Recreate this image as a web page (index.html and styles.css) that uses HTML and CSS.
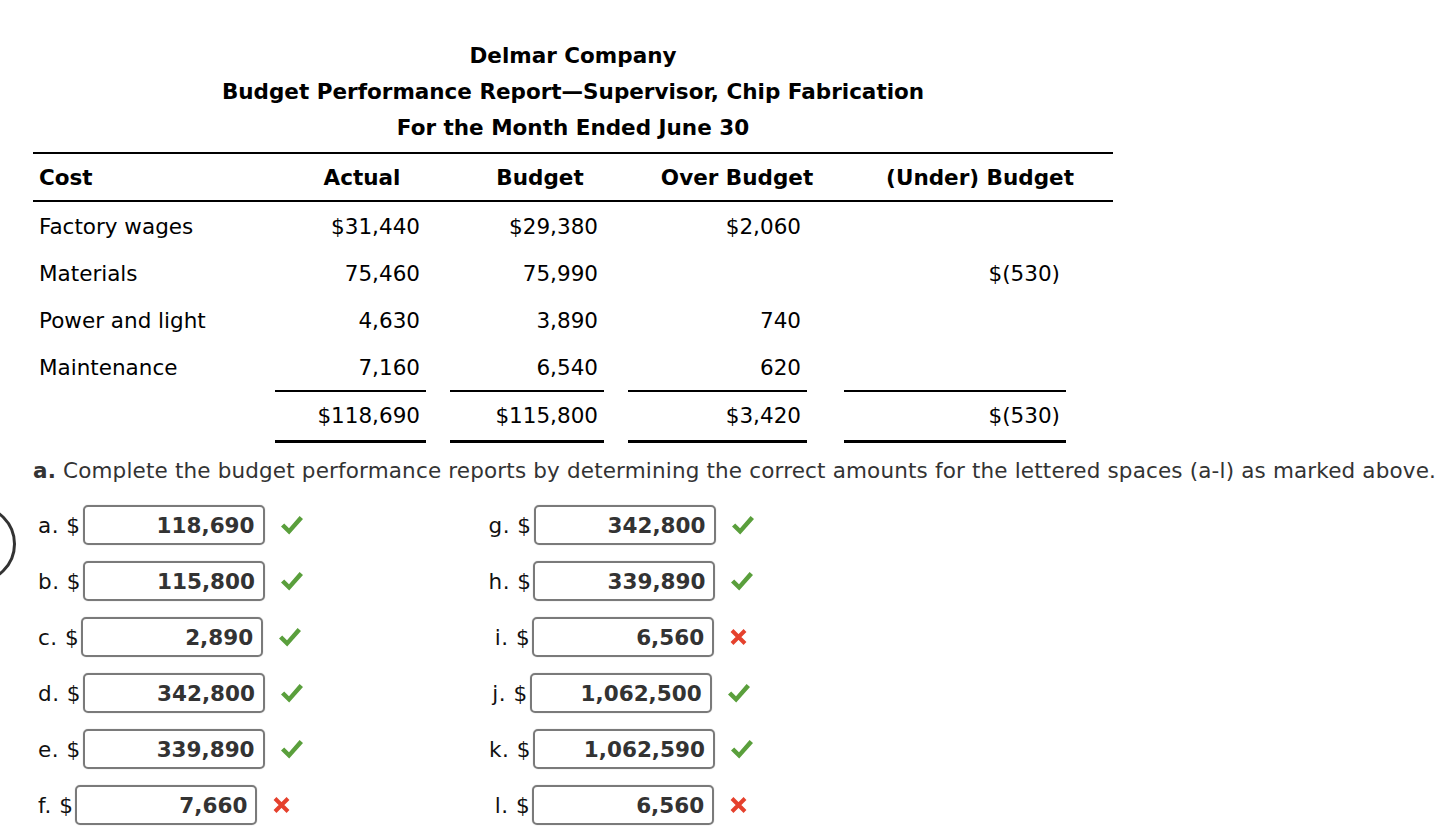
FILE: index.html
```html
<!DOCTYPE html>
<html>
<head>
<meta charset="utf-8">
<link rel="stylesheet" href="styles.css">
</head>
<body>
<div class="page">
  <div class="circle"></div>
  <div class="title">
    <div>Delmar Company</div>
    <div>Budget Performance Report—Supervisor, Chip Fabrication</div>
    <div>For the Month Ended June 30</div>
  </div>
  <div class="report">
    <div class="hd c-cost">Cost</div>
    <div class="hd c-act">Actual</div>
    <div class="hd c-bud">Budget</div>
    <div class="hd c-over">Over Budget</div>
    <div class="hd c-under">(Under) Budget</div>
    <div class="hd"></div>

    <div class="cell name">Factory wages</div>
    <div class="cell num">$31,440</div>
    <div class="cell num">$29,380</div>
    <div class="cell num">$2,060</div>
    <div class="cell num"></div>
    <div class="cell"></div>

    <div class="cell name">Materials</div>
    <div class="cell num">75,460</div>
    <div class="cell num">75,990</div>
    <div class="cell num"></div>
    <div class="cell num">$(530)</div>
    <div class="cell"></div>

    <div class="cell name">Power and light</div>
    <div class="cell num">4,630</div>
    <div class="cell num">3,890</div>
    <div class="cell num">740</div>
    <div class="cell num"></div>
    <div class="cell"></div>

    <div class="cell name">Maintenance</div>
    <div class="cell num">7,160</div>
    <div class="cell num">6,540</div>
    <div class="cell num">620</div>
    <div class="cell num"></div>
    <div class="cell"></div>

    <div class="tcell"></div>
    <div class="tcell"><div class="tot">$118,690</div></div>
    <div class="tcell"><div class="tot in24">$115,800</div></div>
    <div class="tcell"><div class="tot in24">$3,420</div></div>
    <div class="tcell"><div class="tot in37">$(530)</div></div>
    <div class="tcell"></div>
  </div>

  <p class="instr"><b>a.</b> Complete the budget performance reports by determining the correct amounts for the lettered spaces (a-l) as marked above.</p>

  <div class="answers">
    <div class="ans left"><span class="lbl">a. $</span><span class="field">118,690</span><svg class="ic ok" viewBox="0 0 22 20"><path d="M0 11.5 L3.2 8.5 L8 13.2 L18.6 1 L22 4 L8.2 19.5 Z"/></svg></div>
    <div class="ans right"><span class="lbl">g. $</span><span class="field">342,800</span><svg class="ic ok" viewBox="0 0 22 20"><path d="M0 11.5 L3.2 8.5 L8 13.2 L18.6 1 L22 4 L8.2 19.5 Z"/></svg></div>

    <div class="ans left"><span class="lbl">b. $</span><span class="field">115,800</span><svg class="ic ok" viewBox="0 0 22 20"><path d="M0 11.5 L3.2 8.5 L8 13.2 L18.6 1 L22 4 L8.2 19.5 Z"/></svg></div>
    <div class="ans right"><span class="lbl">h. $</span><span class="field">339,890</span><svg class="ic ok" viewBox="0 0 22 20"><path d="M0 11.5 L3.2 8.5 L8 13.2 L18.6 1 L22 4 L8.2 19.5 Z"/></svg></div>

    <div class="ans left"><span class="lbl">c. $</span><span class="field">2,890</span><svg class="ic ok" viewBox="0 0 22 20"><path d="M0 11.5 L3.2 8.5 L8 13.2 L18.6 1 L22 4 L8.2 19.5 Z"/></svg></div>
    <div class="ans right"><span class="lbl">i. $</span><span class="field">6,560</span><svg class="ic bad" viewBox="0 0 17 16"><path d="M2 1.5 L15 14.5 M15 1.5 L2 14.5"/></svg></div>

    <div class="ans left"><span class="lbl">d. $</span><span class="field">342,800</span><svg class="ic ok" viewBox="0 0 22 20"><path d="M0 11.5 L3.2 8.5 L8 13.2 L18.6 1 L22 4 L8.2 19.5 Z"/></svg></div>
    <div class="ans right"><span class="lbl">j. $</span><span class="field">1,062,500</span><svg class="ic ok" viewBox="0 0 22 20"><path d="M0 11.5 L3.2 8.5 L8 13.2 L18.6 1 L22 4 L8.2 19.5 Z"/></svg></div>

    <div class="ans left"><span class="lbl">e. $</span><span class="field">339,890</span><svg class="ic ok" viewBox="0 0 22 20"><path d="M0 11.5 L3.2 8.5 L8 13.2 L18.6 1 L22 4 L8.2 19.5 Z"/></svg></div>
    <div class="ans right"><span class="lbl">k. $</span><span class="field">1,062,590</span><svg class="ic ok" viewBox="0 0 22 20"><path d="M0 11.5 L3.2 8.5 L8 13.2 L18.6 1 L22 4 L8.2 19.5 Z"/></svg></div>

    <div class="ans left"><span class="lbl">f. $</span><span class="field">7,660</span><svg class="ic bad" viewBox="0 0 17 16"><path d="M2 1.5 L15 14.5 M15 1.5 L2 14.5"/></svg></div>
    <div class="ans right"><span class="lbl">l. $</span><span class="field">6,560</span><svg class="ic bad" viewBox="0 0 17 16"><path d="M2 1.5 L15 14.5 M15 1.5 L2 14.5"/></svg></div>
  </div>
</div>
</body>
</html>
```
FILE: styles.css
```css
html, body {
  margin: 0;
  background: #fff;
}
body {
  font-family: "DejaVu Sans", Verdana, sans-serif;
  font-size: 21.5px;
  color: #000;
  overflow: hidden;
}
.page {
  position: relative;
  padding: 38px 0 0 33px;
}
.circle {
  position: absolute;
  left: -62px;
  top: 505px;
  width: 72px;
  height: 72px;
  border: 3px solid #333;
  border-radius: 50%;
}
.title {
  width: 1080px;
  text-align: center;
  font-weight: bold;
  line-height: 36px;
}
.report {
  width: 1080px;
  margin-top: 6px;
  display: grid;
  grid-template-columns: 242px 151px 178px 203px 259px 47px;
  border-top: 2px solid #000;
}
.hd {
  height: 48px;
  display: flex;
  align-items: center;
  justify-content: center;
  font-weight: bold;
  white-space: nowrap;
  border-bottom: 2px solid #000;
  padding-top: 1px;
  box-sizing: border-box;
}
.c-cost { justify-content: flex-start; padding-left: 6px; }
.c-act { padding-left: 23px; }
.c-bud { padding-left: 50px; }
.c-over { padding-left: 63px; }
.c-under { padding-left: 87px; }
.cell {
  height: 47px;
  display: flex;
  align-items: center;
  padding-top: 2px;
  box-sizing: border-box;
}
.name { padding-left: 6px; }
.num {
  justify-content: flex-end;
  padding-right: 6px;
}
.tcell {
  height: 53px;
  display: flex;
}
.tot {
  flex: 1;
  border-top: 2px solid #000;
  border-bottom: 3px solid #000;
  display: flex;
  align-items: center;
  justify-content: flex-end;
  padding-right: 6px;
  padding-bottom: 2px;
}
.in24 { margin-left: 24px; }
.in37 { margin-left: 37px; }
.instr {
  margin: 9px 0 0 0;
  line-height: 36px;
  padding-top: 1px;
  color: #333;
  white-space: nowrap;
  letter-spacing: 0.16px;
}
.instr b { color: #333; }
.answers {
  margin-top: 8px;
  display: grid;
  grid-template-columns: 434px 308px;
  grid-auto-rows: 56px;
}
.ans {
  display: flex;
  align-items: center;
}
.left { padding-left: 5px; }
.right { justify-content: center; }
.lbl {
  color: #111;
  margin-right: 2px;
  letter-spacing: 0.5px;
}
.field {
  box-sizing: border-box;
  width: 182px;
  height: 40px;
  border: 2px solid #7a7a7a;
  border-radius: 5px;
  box-shadow: 0 0 1px rgba(0,0,0,0.35);
  display: flex;
  align-items: center;
  justify-content: flex-end;
  padding-right: 8px;
  font-weight: bold;
  color: #333;
}
.ic {
  margin-left: 16px;
  flex: none;
}
.ok {
  width: 22px;
  height: 20px;
  fill: #5a9f3c;
}
.bad {
  width: 17px;
  height: 16px;
  fill: none;
  stroke: #e5412d;
  stroke-width: 4;
}
```
